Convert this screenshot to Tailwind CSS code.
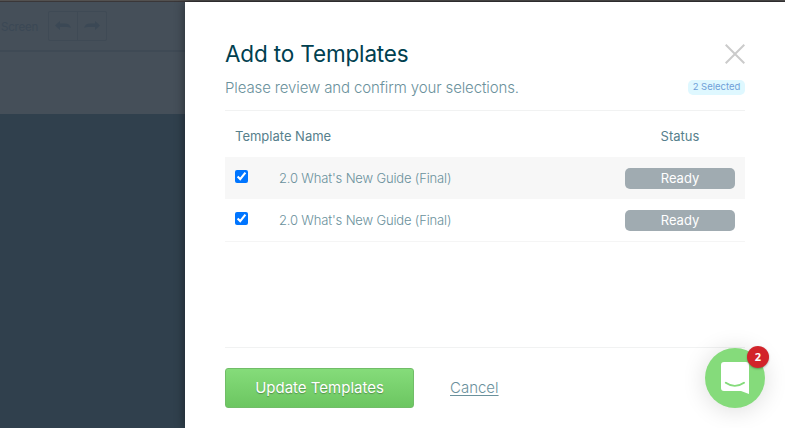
<!DOCTYPE html>
<html lang="en">

<head>
    <meta charset="UTF-8" />
    <meta name="viewport" content="width=device-width, initial-scale=1.0" />
    <title>Add to Templates</title>
    <script src="https://cdn.jsdelivr.net/npm/@tailwindcss/browser@4"></script>
</head>

<body class="h-screen overflow-hidden bg-[#30404d] font-['Inter',sans-serif] text-[#6a919c]">
    <div class="h-full flex flex-col">
        <!-- TOP EDGE -->
        <div class="h-[2px] shrink-0 bg-[#535150] border-b border-[#3a3739]"></div>

        <div class="flex flex-1 min-h-0">
            <!-- DIMMED EDITOR -->
            <div class="w-[185px] shrink-0">
                <div class="h-[50px] bg-[#454f59] border-b-2 border-[#3f4a55] flex items-center pl-px">
                    <span class="w-[47px] pt-[3px] text-[11.5px] tracking-[-0.2px] text-[#3b4855] whitespace-nowrap">Screen</span>
                    <div class="flex w-[59px] h-[30px] border border-[#3f4a55] rounded-xs">
                        <div class="flex-1 flex items-center justify-center border-r border-[#3f4a55]">
                            <svg class="w-4 h-[10px]" viewBox="0 0 16 10" fill="#3b4855">
                                <path d="M0 4.500 5 0v2.500h5c3 0 5 1.500 6 4.200-1.500-.5-3-.7-5-.7H5V9z" />
                            </svg>
                        </div>
                        <div class="flex-1 flex items-center justify-center">
                            <svg class="w-4 h-[10px]" viewBox="0 0 16 10" fill="#3b4855">
                                <path d="M16 4.500 11 0v2.500H6C3 2.500 1 4 0 6.700 1.500 6.200 3 6 5 6h6v3z" />
                            </svg>
                        </div>
                    </div>
                </div>
                <div class="h-[62px] bg-[#454f59]"></div>
            </div>

            <!-- PANEL -->
            <div class="relative flex-1 bg-white px-10 flex flex-col shadow-[0_0_10px_rgba(0,0,0,0.45)]">
                <div class="h-[109px] shrink-0 border-b border-[#f1f2f2] pt-9 flex justify-between">
                    <div>
                        <h2 class="text-[22.5px] leading-[32px] tracking-[-0.15px] text-[#00404f] whitespace-nowrap">Add to Templates</h2>
                        <p class="mt-[7px] text-[15px] leading-[22px] tracking-[-0.12px] font-light whitespace-nowrap">Please review and confirm your selections.</p>
                    </div>
                    <div class="flex flex-col items-end pt-1.5">
                        <svg class="w-5 h-5" viewBox="0 0 20 20" fill="none" stroke="#cbcbcb" stroke-width="2">
                            <path d="M.7.7 19.3 19.3M19.3.7.7 19.3" />
                        </svg>
                        <span class="mt-4 w-[57px] h-[15px] rounded-[5px] bg-[#dff8ff] text-[#6f9fd8] text-[9.5px] leading-[14px] text-center whitespace-nowrap">2 Selected</span>
                    </div>
                </div>

                <!-- TEMPLATE LIST -->
                <div class="h-[46px] shrink-0 px-2.5 pb-1 pt-2.5 flex items-center justify-between text-[13px] text-[#56808c]">
                    <span>Template Name</span>
                    <span class="w-[110px] text-center">Status</span>
                </div>
                <div class="h-[42px] shrink-0 px-2.5 flex items-center bg-[#f7f7f7] text-[13px] tracking-[-0.16px] font-light">
                    <input type="checkbox" checked class="w-[13px] h-[13px] mb-1" />
                    <span class="ml-[31px] flex-1 pt-0.5">2.0 What's New Guide (Final)</span>
                    <span class="w-[110px] h-[21px] rounded-[5px] bg-[#a0abb1] text-white text-[13px] leading-[21px] tracking-normal font-normal text-center">Ready</span>
                </div>
                <div class="h-[43px] shrink-0 px-2.5 flex items-center border-b border-[#f5f5f5] text-[13px] tracking-[-0.16px] font-light">
                    <input type="checkbox" checked class="w-[13px] h-[13px] mb-1" />
                    <span class="ml-[31px] flex-1 pt-0.5">2.0 What's New Guide (Final)</span>
                    <span class="w-[110px] h-[21px] rounded-[5px] bg-[#a0abb1] text-white text-[13px] leading-[21px] tracking-normal font-normal text-center">Ready</span>
                </div>

                <!-- ACTIONS -->
                <div class="mt-auto h-[81px] shrink-0 border-t border-[#f1f2f2] pt-5 flex items-start">
                    <button class="w-[189px] h-10 rounded-[3px] border border-[#71bd68] bg-linear-to-b from-[#85dc7a] to-[#6cc661] text-white text-[15px] text-shadow-[0_1px_1px_rgba(0,0,0,0.3)] whitespace-nowrap">Update Templates</button>
                    <a href="#" class="ml-9 text-[15px] leading-10 font-light underline underline-offset-2">Cancel</a>
                </div>

                <!-- CHAT LAUNCHER -->
                <div class="absolute right-5 bottom-5 w-[60px] h-[60px] rounded-full bg-[#85db7b] shadow-[0_2px_24px_rgba(0,0,0,0.14)]">
                    <svg class="w-[60px] h-[60px]" viewBox="0 0 60 60">
                        <path d="M19 14h22a3 3 0 0 1 3 3v29l-8-3H19a3 3 0 0 1-3-3V17a3 3 0 0 1 3-3z" fill="#fff" />
                        <path d="M20.800 34.800c5.500 4 12.500 4 18.200 0" fill="none" stroke="#85db7b" stroke-width="2" stroke-linecap="round" />
                    </svg>
                    <span class="absolute left-[42px] top-[-2px] w-[22px] h-[22px] rounded-full bg-[#d2232a] text-white text-[11px] leading-[21px] font-bold text-center font-['Open_Sans',sans-serif] shadow-[0_1px_2px_rgba(0,0,0,0.3)]">2</span>
                </div>
            </div>
        </div>
    </div>
</body>

</html>
